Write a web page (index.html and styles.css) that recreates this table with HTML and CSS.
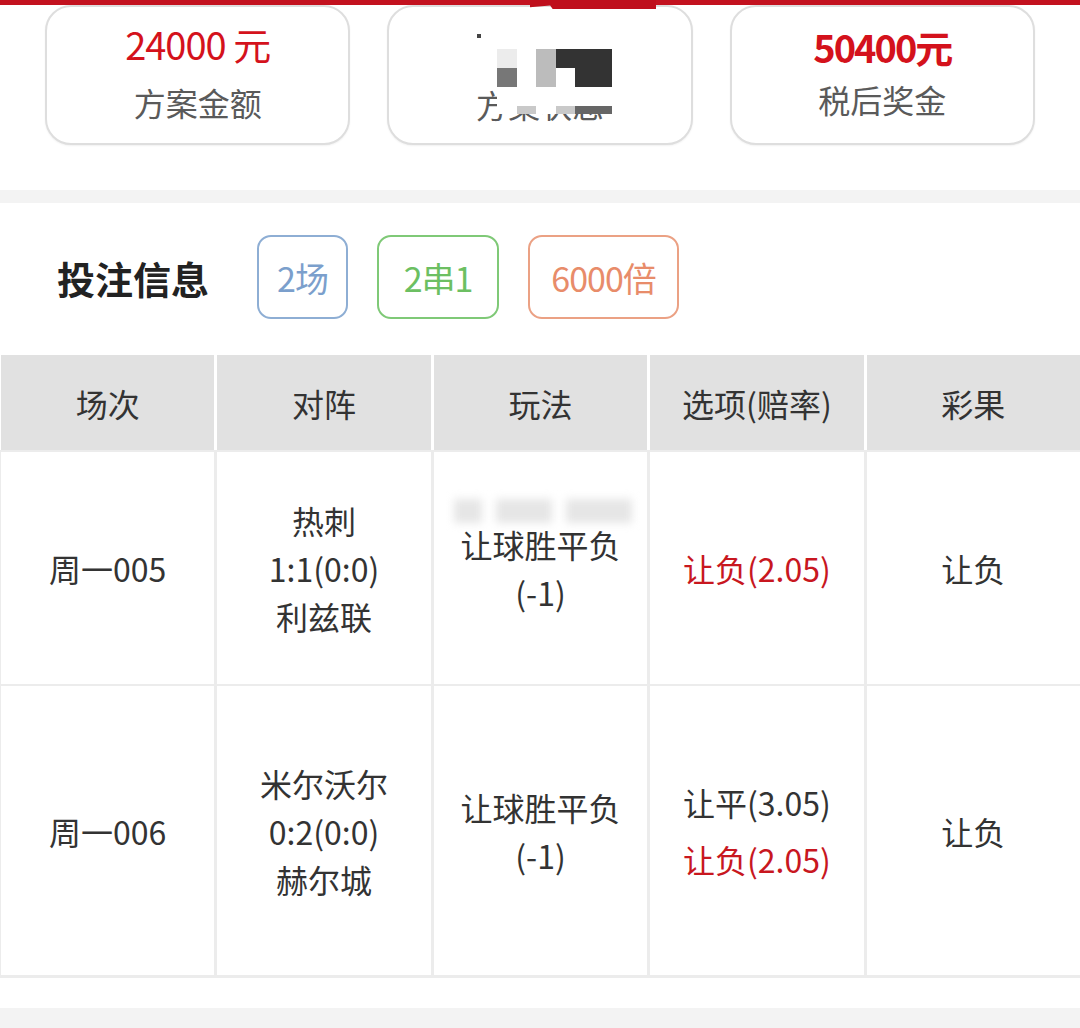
FILE: index.html
```html
<!DOCTYPE html>
<html lang="zh-CN">
<head>
<meta charset="utf-8">
<title>投注信息</title>
<link rel="stylesheet" href="styles.css">
</head>
<body>
<div class="topbar"><div class="notch"></div></div>

<div class="summary">
  <div class="card">
    <div class="card-value">24000 元</div>
    <div class="card-label">方案金额</div>
  </div>
  <div class="card card-masked">
    <div class="card-value">&nbsp;</div>
    <div class="card-label">方案状态</div>
    <div class="mosaic-dot"></div>
    <div class="mosaic">
      <span class="m1"></span><span class="m0"></span><span class="m2"></span><span class="m3"></span><span class="m3 w2"></span>
      <span class="m4"></span><span class="m0"></span><span class="m2"></span><span class="m0"></span><span class="m3 w2"></span>
      <span class="m5 tall"></span><span class="m0 tall"></span><span class="m0 tall"></span><span class="m0 tall"></span><span class="m0 tall w2"></span>
      <span class="m0 short"></span><span class="m6 short"></span><span class="m0 short"></span><span class="m6 short"></span><span class="m7 short w2"></span>
    </div>
  </div>
  <div class="card card-win">
    <div class="card-value bold">50400元</div>
    <div class="card-label">税后奖金</div>
  </div>
</div>

<div class="band"></div>

<section class="bet">
  <div class="bet-head">
    <h2 class="bet-title">投注信息</h2>
    <span class="tag tag-blue">2场</span>
    <span class="tag tag-green">2串1</span>
    <span class="tag tag-orange">6000倍</span>
  </div>

  <div class="thead">
    <div class="th">场次</div>
    <div class="th">对阵</div>
    <div class="th">玩法</div>
    <div class="th">选项(赔率)</div>
    <div class="th">彩果</div>
  </div>

  <div class="tbody">
    <div class="row row-1">
      <div class="td">周一005</div>
      <div class="td"><div>热刺</div><div>1:1(0:0)</div><div>利兹联</div></div>
      <div class="td td-play">
        <div class="smudge"><span class="s1"></span><span class="s2"></span><span class="s3"></span></div>
        <div>让球胜平负</div><div>(-1)</div>
      </div>
      <div class="td"><div class="red">让负(2.05)</div></div>
      <div class="td">让负</div>
    </div>
    <div class="row row-2">
      <div class="td">周一006</div>
      <div class="td"><div>米尔沃尔</div><div>0:2(0:0)</div><div>赫尔城</div></div>
      <div class="td"><div>让球胜平负</div><div>(-1)</div></div>
      <div class="td td-opts"><div>让平(3.05)</div><div class="red">让负(2.05)</div></div>
      <div class="td">让负</div>
    </div>
  </div>
</section>

<div class="band band-bottom"></div>
</body>
</html>
```

FILE: styles.css
```css
html, body {
  margin: 0;
  padding: 0;
  background: #ffffff;
}
body {
  width: 1080px;
  font-family: "Noto Sans CJK SC", "Noto Sans", sans-serif;
  color: #333333;
  overflow: hidden;
}

.topbar {
  position: relative;
  height: 5px;
  background: #c3121f;
  z-index: 2;
}
.notch {
  position: absolute;
  left: 530px;
  top: 0;
  width: 126px;
  height: 9px;
  background: #bf0f1c;
  clip-path: polygon(0 0, 100% 0, 100% 100%, 18% 100%, 16% 60%, 0 80%);
}

.summary {
  display: flex;
  gap: 37px;
  padding: 0 45px 45px 45px;
}
.card {
  position: relative;
  flex: 1;
  height: 136px;
  border: 2px solid #dedede;
  border-radius: 26px;
  box-shadow: 0 1px 2px rgba(0,0,0,0.06);
  display: flex;
  flex-direction: column;
  align-items: center;
  justify-content: center;
  background: #fff;
}
.card-value {
  font-size: 38px;
  line-height: 52px;
  color: #d4121c;
  letter-spacing: -1px;
  margin-top: -4px;
}
.card-value.bold {
  font-weight: 700;
  letter-spacing: -2px;
}
.card-label {
  font-size: 32px;
  line-height: 52px;
  color: #5a5a5a;
  margin-top: 6px;
}
.card-win .card-label {
  margin-top: 0;
}
.card-masked .card-label {
  margin-top: 10px;
}

.mosaic-dot {
  position: absolute;
  left: 88px;
  top: 27px;
  width: 4px;
  height: 4px;
  background: #444;
}
.mosaic {
  position: absolute;
  left: 108px;
  top: 42px;
  display: grid;
  grid-template-columns: 20px 19px 20px 19px 37px;
  grid-template-rows: 19px 19px 19px 8px;
}
.mosaic span { display: block; }
.mosaic .m0 { background: #ffffff; }
.mosaic .m1 { background: #ececec; }
.mosaic .m2 { background: #bcbcbc; }
.mosaic .m3 { background: #333333; }
.mosaic .m4 { background: #777777; }
.mosaic .m5 { background: #ffffff; }
.mosaic .m6 { background: #c9c9c9; }
.mosaic .m7 { background: #666666; }

.band {
  height: 13px;
  background: #f3f3f3;
}
.band-bottom {
  height: 20px;
  margin-top: 30px;
}

.bet-head {
  display: flex;
  align-items: center;
  padding: 32px 0 36px 57px;
}
.bet-title {
  margin: 0 48px 0 0;
  font-size: 38px;
  font-weight: 700;
  color: #222;
  letter-spacing: 0;
}
.tag {
  box-sizing: border-box;
  height: 84px;
  display: flex;
  align-items: center;
  justify-content: center;
  border: 2px solid;
  border-radius: 14px;
  font-size: 34px;
  margin-right: 29px;
  letter-spacing: -1px;
}
.tag-blue {
  width: 91px;
  color: #7b9fcc;
  border-color: #8eaed4;
}
.tag-green {
  width: 122px;
  color: #6cbf62;
  border-color: #7fc977;
}
.tag-orange {
  width: 151px;
  color: #e88c6a;
  border-color: #eba184;
}

.thead {
  display: grid;
  grid-template-columns: repeat(5, 1fr);
  column-gap: 3px;
  padding: 0 0 0 1px;
  background: #fff;
}
.th {
  height: 95px;
  background: #e1e1e1;
  display: flex;
  align-items: center;
  justify-content: center;
  font-size: 32px;
  color: #333;
}

.tbody {
  display: flex;
  flex-direction: column;
  gap: 2px;
  padding: 2px 0 3px 1px;
  background: #ececec;
}
.row {
  display: grid;
  grid-template-columns: repeat(5, 1fr);
  column-gap: 3px;
}
.row-1 { height: 232px; }
.row-2 { height: 289px; }
.td {
  position: relative;
  background: #fff;
  display: flex;
  flex-direction: column;
  align-items: center;
  justify-content: center;
  font-size: 32px;
  line-height: 48px;
  color: #333;
  text-align: center;
}
.td-opts div + div { margin-top: 9px; }
.red { color: #c8171f; }

.smudge {
  position: absolute;
  left: 18px;
  top: 44px;
  width: 182px;
  height: 30px;
  filter: blur(4px);
}
.smudge span {
  position: absolute;
  top: 3px;
  height: 24px;
  background: #e6e6e6;
}
.smudge .s1 { left: 2px; width: 28px; }
.smudge .s2 { left: 44px; width: 56px; }
.smudge .s3 { left: 114px; width: 66px; }
```
